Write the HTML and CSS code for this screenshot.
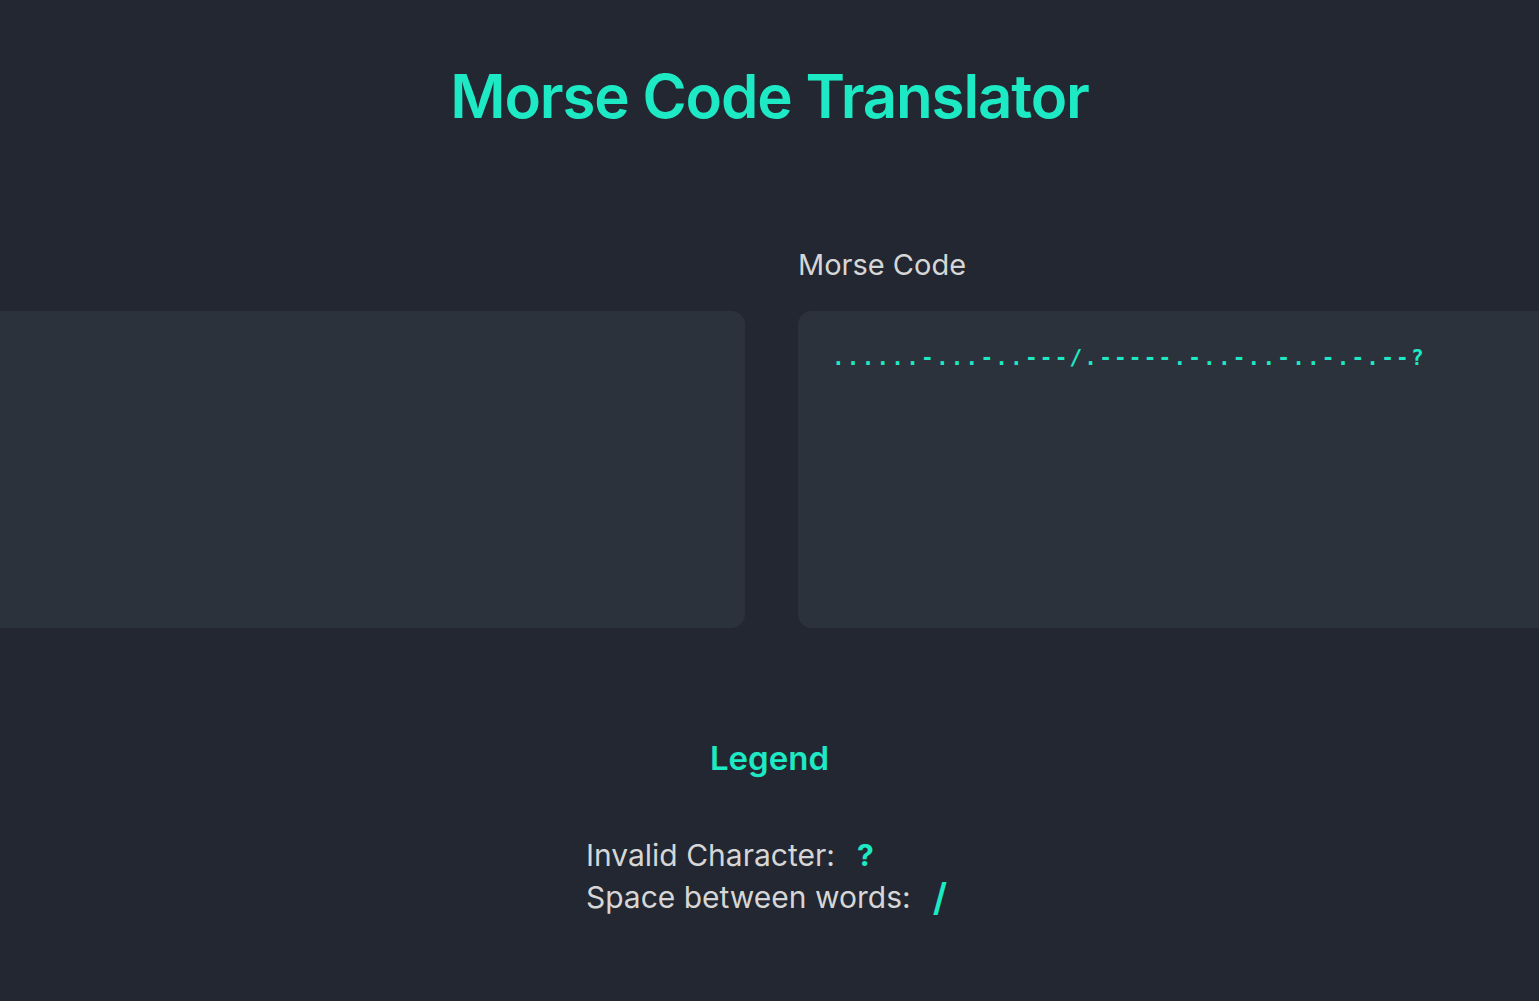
FILE: index.html
```html
<!DOCTYPE html>
<html lang="en">
<head>
<meta charset="utf-8">
<title>Morse Code Translator</title>
<link rel="stylesheet" href="styles.css">
</head>
<body>
  <h1 class="title">Morse Code Translator</h1>
  <main class="translator">
    <section class="panel">
      <div class="box"></div>
    </section>
    <section class="panel">
      <label class="panel-label">Morse Code</label>
      <div class="box"><div class="morse">......-...-..---/.-----.-..-..-..-.-.--?</div></div>
    </section>
  </main>
  <section class="legend">
    <h2 class="legend-title">Legend</h2>
    <div class="legend-list">
      <div class="legend-row"><span>Invalid Character:</span><span class="sym sym-q">?</span></div>
      <div class="legend-row"><span>Space between words:</span><span class="sym sym-slash">/</span></div>
    </div>
  </section>
</body>
</html>
```

FILE: styles.css
```css
html, body {
  margin: 0;
  padding: 0;
}
body {
  background: #222731;
  color: #d6d6d6;
  font-family: "Inter", "Noto Sans", sans-serif;
  overflow: hidden;
  width: 1539px;
  height: 1001px;
}
.title {
  margin: 0;
  padding-top: 48px;
  line-height: 96px;
  font-size: 60px;
  font-weight: 600;
  color: #1de9c4;
  text-align: center;
  letter-spacing: -1.15px;
}
.translator {
  display: flex;
  justify-content: center;
  align-items: flex-end;
  gap: 53px;
  margin-top: 100px;
  padding-left: 4px;
}
.panel {
  flex: 0 0 796px;
  display: flex;
  flex-direction: column;
}
.panel-label {
  font-size: 29px;
  line-height: 42px;
  margin-bottom: 25px;
  color: #d6d6d6;
}
.box {
  height: 317px;
  border-radius: 14px;
  background: #2c323c;
  box-sizing: border-box;
  padding: 32px 34px;
}
.morse {
  font-family: "DejaVu Sans Mono", monospace;
  font-size: 21px;
  font-weight: 700;
  line-height: 30px;
  letter-spacing: 2.2px;
  color: #1de9c4;
}
.legend {
  margin-top: 106px;
  display: flex;
  flex-direction: column;
  align-items: center;
}
.legend-title {
  margin: 0;
  font-size: 33px;
  line-height: 48px;
  font-weight: 600;
  color: #1de9c4;
}
.legend-list {
  margin-top: 52px;
  padding-right: 6px;
}
.legend-row {
  display: flex;
  align-items: center;
  font-size: 30px;
  line-height: 42px;
}
.sym {
  color: #1de9c4;
  font-weight: 700;
  margin-left: 22px;
}
.sym-slash {
  font-size: 38px;
  font-weight: 600;
}
```
